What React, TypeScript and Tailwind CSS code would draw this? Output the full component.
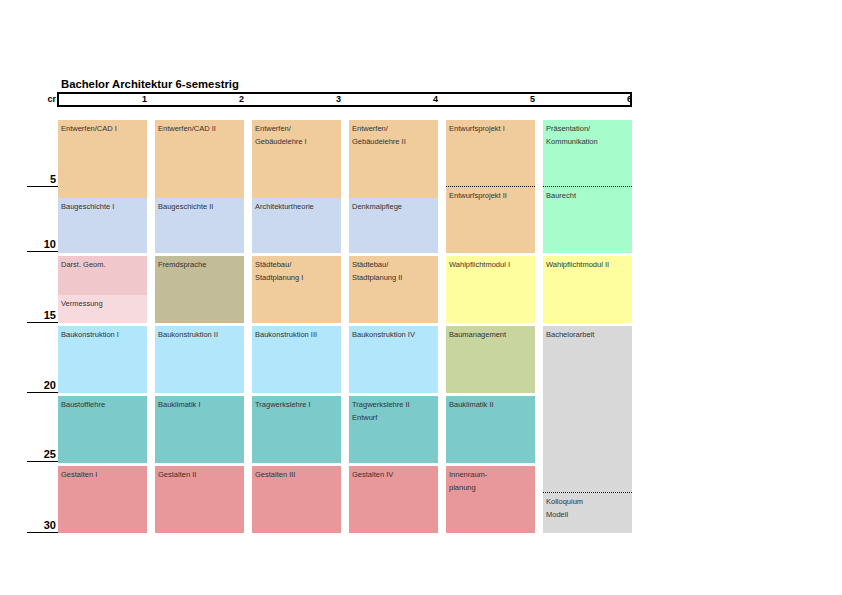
import React from 'react';

type Part = { label: string[]; color: string; h?: string; dotted?: boolean };
type Slot = { parts: Part[]; span?: string };

const ORANGE = 'bg-[#f0cb9b]';
const BLUE = 'bg-[#cad8f0]';
const LBLUE = 'bg-[#b2e6fa]';
const TEAL = 'bg-[#7ccaca]';
const RED = 'bg-[#e8989a]';
const YELLOW = 'bg-[#fffe9e]';
const GREEN = 'bg-[#a6fcca]';
const GRAY = 'bg-[#d8d8d8]';

// one list per semester, top to bottom
const semesters: Slot[][] = [
  [
    { parts: [{ label: ['Entwerfen/CAD I'], color: ORANGE, h: 'h-[78px]' }, { label: ['Baugeschichte I'], color: BLUE }] },
    { parts: [{ label: ['Darst. Geom.'], color: 'bg-[#f0c8cc]', h: 'h-[39px]' }, { label: ['Vermessung'], color: 'bg-[#f6dadd]' }] },
    { parts: [{ label: ['Baukonstruktion I'], color: LBLUE }] },
    { parts: [{ label: ['Baustofflehre'], color: TEAL }] },
    { parts: [{ label: ['Gestalten I'], color: RED }] },
  ],
  [
    { parts: [{ label: ['Entwerfen/CAD II'], color: ORANGE, h: 'h-[78px]' }, { label: ['Baugeschichte II'], color: BLUE }] },
    { parts: [{ label: ['Fremdsprache'], color: 'bg-[#c2bc98]' }] },
    { parts: [{ label: ['Baukonstruktion II'], color: LBLUE }] },
    { parts: [{ label: ['Bauklimatik I'], color: TEAL }] },
    { parts: [{ label: ['Gestalten II'], color: RED }] },
  ],
  [
    { parts: [{ label: ['Entwerfen/', 'Gebäudelehre I'], color: ORANGE, h: 'h-[78px]' }, { label: ['Architekturtheorie'], color: BLUE }] },
    { parts: [{ label: ['Städtebau/', 'Stadtplanung I'], color: ORANGE }] },
    { parts: [{ label: ['Baukonstruktion III'], color: LBLUE }] },
    { parts: [{ label: ['Tragwerkslehre I'], color: TEAL }] },
    { parts: [{ label: ['Gestalten III'], color: RED }] },
  ],
  [
    { parts: [{ label: ['Entwerfen/', 'Gebäudelehre II'], color: ORANGE, h: 'h-[78px]' }, { label: ['Denkmalpflege'], color: BLUE }] },
    { parts: [{ label: ['Städtebau/', 'Stadtplanung II'], color: ORANGE }] },
    { parts: [{ label: ['Baukonstruktion IV'], color: LBLUE }] },
    { parts: [{ label: ['Tragwerkslehre II', 'Entwurf'], color: TEAL }] },
    { parts: [{ label: ['Gestalten IV'], color: RED }] },
  ],
  [
    { parts: [{ label: ['Entwurfsprojekt I'], color: ORANGE, h: 'h-[66px]' }, { label: ['Entwurfsprojekt II'], color: ORANGE, dotted: true }] },
    { parts: [{ label: ['Wahlpflichtmodul I'], color: YELLOW }] },
    { parts: [{ label: ['Baumanagement'], color: 'bg-[#c9d59f]' }] },
    { parts: [{ label: ['Bauklimatik II'], color: TEAL }] },
    { parts: [{ label: ['Innenraum-', 'planung'], color: RED }] },
  ],
  [
    { parts: [{ label: ['Präsentation/', 'Kommunikation'], color: GREEN, h: 'h-[66px]' }, { label: ['Baurecht'], color: GREEN, dotted: true }] },
    { parts: [{ label: ['Wahlpflichtmodul II'], color: YELLOW }] },
    {
      span: 'row-span-3',
      parts: [
        { label: ['Bachelorarbeit'], color: GRAY, h: 'h-[166px]' },
        { label: ['Kolloquium', 'Modell'], color: GRAY, dotted: true },
      ],
    },
  ],
];

const ticks = [
  { n: '5', h: 'h-[67px]' },
  { n: '10', h: 'h-[65px]' },
  { n: '15', h: 'h-[71px]' },
  { n: '20', h: 'h-[70px]' },
  { n: '25', h: 'h-[69px]' },
  { n: '30', h: 'h-[71px]' },
];

const App = () => {
  return (
    <div className="w-[842px] h-[595px] bg-white pl-[27px] pt-[77px] font-['Liberation_Sans',Arial,sans-serif] text-black">
      <div className="ml-[34px] h-[15px] text-[11.3px] leading-[15px] font-bold">
        Bachelor Architektur 6-semestrig
      </div>

      {/* credit header */}
      <div className="flex h-[15px]">
        <div className="w-[30px] pr-[1px] text-right text-[9px] font-bold leading-[15px]">cr</div>
        <div className="w-[575px] border-2 border-black grid grid-cols-[repeat(6,89px)] gap-x-2 pl-[1px]">
          {[1, 2, 3, 4, 5, 6].map(n => (
            <div key={n} className="text-right pr-[2px] text-[9px] font-bold leading-[11px]">
              {n}
            </div>
          ))}
        </div>
      </div>

      <div className="flex mt-[13px]">
        {/* credit axis */}
        <div className="w-[31px] flex flex-col">
          {ticks.map(t => (
            <div key={t.n} className={`${t.h} flex flex-col justify-end border-b border-black`}>
              <span className="text-right pr-[2px] text-[11px] font-bold leading-[13px]">{t.n}</span>
            </div>
          ))}
        </div>

        {/* modules */}
        <div className="grid grid-flow-col grid-cols-[repeat(6,89px)] grid-rows-[133px_67px_67px_67px_67px] gap-x-2 gap-y-[3px]">
          {semesters.map((slots, si) =>
            slots.map((slot, i) => (
              <div key={`${si}-${i}`} className={`flex flex-col ${slot.span ?? ''}`}>
                {slot.parts.map((p, j) => (
                  <div
                    key={j}
                    className={`${p.color} ${p.h ?? 'flex-1'} ${p.dotted ? 'border-t border-dotted border-black' : ''} pl-[3px] pt-[3px] text-[7.5px] leading-[12.5px] text-[#333]`}
                  >
                    {p.label.map(l => (
                      <div key={l}>{l}</div>
                    ))}
                  </div>
                ))}
              </div>
            ))
          )}
        </div>
      </div>
    </div>
  );
};

export default App;
